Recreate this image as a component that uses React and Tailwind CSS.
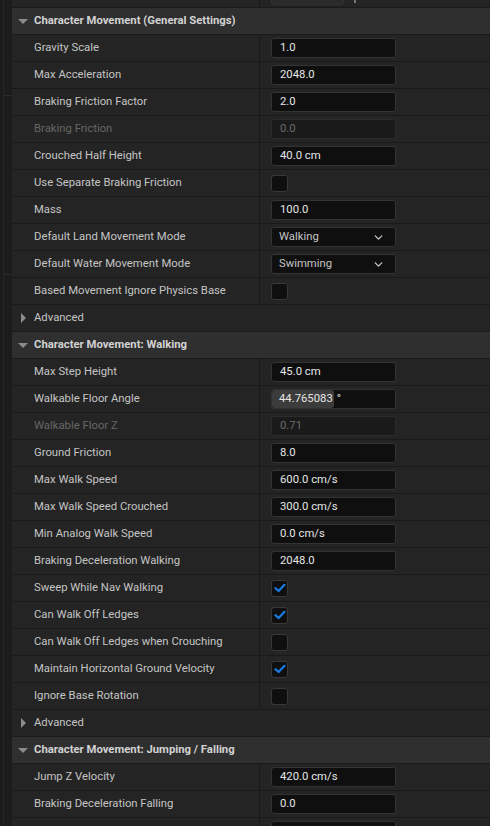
import { ChevronDown } from 'lucide-react';

const SECTIONS = [
  {
    title: 'Character Movement (General Settings)',
    rows: [
      { label: 'Gravity Scale', type: 'num', value: '1.0' },
      { label: 'Max Acceleration', type: 'num', value: '2048.0' },
      { label: 'Braking Friction Factor', type: 'num', value: '2.0' },
      { label: 'Braking Friction', type: 'num', value: '0.0', disabled: true },
      { label: 'Crouched Half Height', type: 'num', value: '40.0 cm' },
      { label: 'Use Separate Braking Friction', type: 'check', checked: false },
      { label: 'Mass', type: 'num', value: '100.0' },
      { label: 'Default Land Movement Mode', type: 'select', value: 'Walking' },
      { label: 'Default Water Movement Mode', type: 'select', value: 'Swimming' },
      { label: 'Based Movement Ignore Physics Base', type: 'check', checked: false },
    ],
  },
  {
    title: 'Character Movement: Walking',
    rows: [
      { label: 'Max Step Height', type: 'num', value: '45.0 cm' },
      { label: 'Walkable Floor Angle', type: 'slider', value: '44.765083', unit: '°' },
      { label: 'Walkable Floor Z', type: 'num', value: '0.71', disabled: true },
      { label: 'Ground Friction', type: 'num', value: '8.0' },
      { label: 'Max Walk Speed', type: 'num', value: '600.0 cm/s' },
      { label: 'Max Walk Speed Crouched', type: 'num', value: '300.0 cm/s' },
      { label: 'Min Analog Walk Speed', type: 'num', value: '0.0 cm/s' },
      { label: 'Braking Deceleration Walking', type: 'num', value: '2048.0' },
      { label: 'Sweep While Nav Walking', type: 'check', checked: true },
      { label: 'Can Walk Off Ledges', type: 'check', checked: true },
      { label: 'Can Walk Off Ledges when Crouching', type: 'check', checked: false },
      { label: 'Maintain Horizontal Ground Velocity', type: 'check', checked: true },
      { label: 'Ignore Base Rotation', type: 'check', checked: false },
    ],
  },
  {
    title: 'Character Movement: Jumping / Falling',
    noAdvanced: true,
    rows: [
      { label: 'Jump Z Velocity', type: 'num', value: '420.0 cm/s' },
      { label: 'Braking Deceleration Falling', type: 'num', value: '0.0' },
      { label: '', type: 'num', value: '' },
    ],
  },
];

function Value({ row }) {
  if (row.type === 'check') {
    return (
      <div className="w-[17px] h-[17px] rounded-[3px] bg-[#0f0f0f] border border-[#383838] flex items-center justify-center">
        {row.checked && (
          <svg width="12" height="10" viewBox="0 0 12 10">
            <path d="M1.5 5.2 L4.6 8 L10.5 1.8" fill="none" stroke="#1a7de6" strokeWidth="2.2" strokeLinecap="round" strokeLinejoin="round" />
          </svg>
        )}
      </div>
    );
  }
  if (row.type === 'select') {
    return (
      <div className="w-[125px] h-[20px] rounded-[3px] bg-[#0f0f0f] border border-[#333333] flex items-center justify-between pl-[7px] pr-[10px] text-[#c4c4c4]">
        <span>{row.value}</span>
        <ChevronDown size={13} strokeWidth={2.5} className="text-[#c4c4c4]" />
      </div>
    );
  }
  if (row.type === 'slider') {
    return (
      <div className="w-[125px] h-[20px] rounded-[3px] bg-[#0f0f0f] border border-[#333333] flex items-stretch text-[#e6e6e6]">
        <span className="flex items-center pl-[7px] pr-[1px] bg-[#3c3c3c] rounded-[3px]">{row.value}</span>
        <span className="flex items-center pl-[3px]">{row.unit}</span>
      </div>
    );
  }
  return (
    <div
      className={
        row.disabled
          ? 'w-[125px] h-[20px] rounded-[3px] bg-[#1a1a1a] border border-[#2c2c2c] flex items-center pl-[8px] text-[#6a6a6a]'
          : 'w-[125px] h-[20px] rounded-[3px] bg-[#0f0f0f] border border-[#333333] flex items-center pl-[8px] text-[#e6e6e6]'
      }
    >
      {row.value}
    </div>
  );
}

function Row({ row }) {
  return (
    <div className="h-[27px] flex border-b border-[#1a1a1a] bg-[#242424]">
      <div className={`w-[248px] flex items-center pl-[22px] border-r border-[#1a1a1a] ${row.disabled ? 'text-[#666666]' : 'text-[#c4c4c4]'}`}>
        {row.label}
      </div>
      <div className="flex-1 flex items-center pl-[11px]">
        <Value row={row} />
      </div>
    </div>
  );
}

function Header({ title }) {
  return (
    <div className="h-[27px] flex items-center bg-[#2f2f2f] border-b border-[#1a1a1a] text-[#d2d2d2] font-bold">
      <div className="w-[22px] flex justify-center">
        <div className="w-0 h-0 border-l-[5px] border-r-[5px] border-t-[5px] border-l-transparent border-r-transparent border-t-[#8c8c8c]" />
      </div>
      <span>{title}</span>
    </div>
  );
}

function Advanced() {
  return (
    <div className="h-[27px] flex items-center bg-[#242424] border-b border-[#1a1a1a] text-[#c4c4c4]">
      <div className="w-[22px] flex justify-center">
        <div className="w-0 h-0 border-t-[5px] border-b-[5px] border-l-[5px] border-t-transparent border-b-transparent border-l-[#8c8c8c]" />
      </div>
      <span>Advanced</span>
    </div>
  );
}

export default function App() {
  return (
    <div className="h-[826px] w-[490px] overflow-hidden flex bg-[#1a1a1a] text-[11.3px]" style={{ fontFamily: 'Roboto, "Noto Sans", sans-serif' }}>
      {/* left gutter */}
      <div className="w-[12px] flex-shrink-0 bg-[#1c1c1c] flex">
        <div className="w-[4px] border-r border-[#262626]" />
        <div className="flex-1">
          <div className="h-[96px] border-b border-[#2c2c2c]" />
          <div className="h-[179px] border-b border-[#2c2c2c]" />
        </div>
      </div>

      <div className="flex-1 min-w-0">
        {/* clipped row above */}
        <div className="h-[8px] flex border-b border-[#1a1a1a] bg-[#242424] overflow-hidden">
          <div className="w-[248px] border-r border-[#1a1a1a]" />
          <div className="flex-1 flex items-end pl-[11px] pb-[2px] gap-[10px]">
            <div className="w-[73px] h-[20px] flex-shrink-0 rounded-[3px] bg-[#2a2a2a] border border-[#333333]" />
            <div className="w-[2px] h-[3px] mb-[2px] bg-[#777777]" />
          </div>
        </div>

        {SECTIONS.map((s) => (
          <div key={s.title}>
            <Header title={s.title} />
            {s.rows.map((r, i) => (
              <Row key={i} row={r} />
            ))}
            {!s.noAdvanced && <Advanced />}
          </div>
        ))}
      </div>
    </div>
  );
}
